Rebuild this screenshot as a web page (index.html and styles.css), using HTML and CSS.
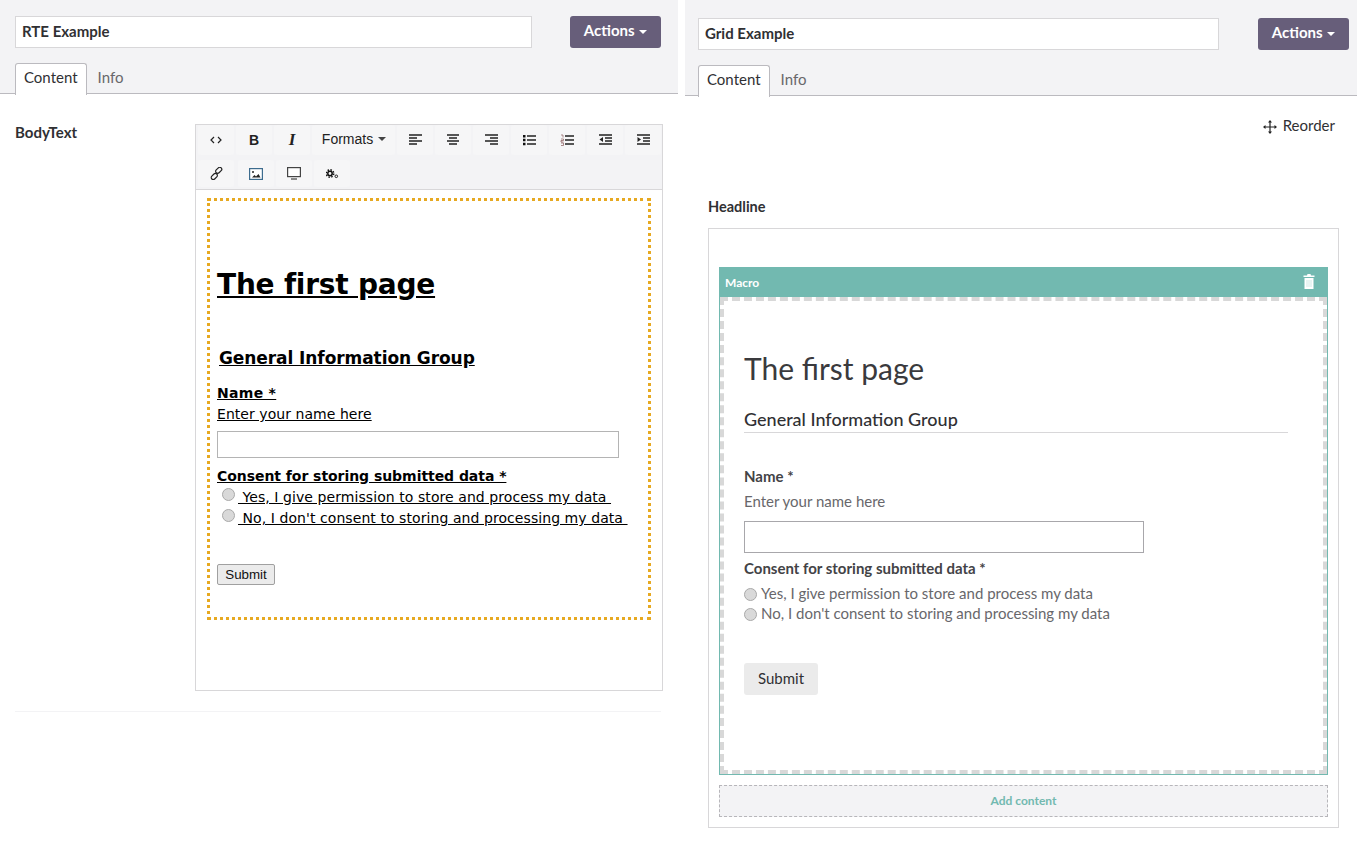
FILE: index.html
```html
<!DOCTYPE html>
<html lang="en">
<head>
  <meta charset="UTF-8" />
  <title>RTE and Grid Examples</title>
  <link rel="stylesheet" href="styles.css">
</head>
<body>
  <!-- left editor: rich text -->
  <section class="panel panel-rte">
    <div class="head">
      <div class="head-row">
        <input class="name-input" type="text" value="RTE Example" />
        <button class="actions-btn">Actions <span class="caret"></span></button>
      </div>
      <div class="tabs">
        <span class="tab active">Content</span>
        <span class="tab">Info</span>
      </div>
    </div>

    <div class="prop-row">
      <label class="prop-label">BodyText</label>
      <div class="rte">
        <div class="toolbar">
          <div class="tool-line">
            <span class="tool"><svg width="12" height="12" viewBox="0 0 12 12"><path d="M4 3 1 6l3 3M8 3l3 3-3 3" fill="none" stroke="#222" stroke-width="1.2"/></svg></span>
            <span class="tool"><b class="tool-b">B</b></span>
            <span class="tool"><i class="tool-i">I</i></span>
            <span class="tool tool-formats">Formats <span class="caret dark"></span></span>
            <span class="tool"><svg width="14" height="12" viewBox="0 0 14 12"><path d="M1 1h13M1 4h8M1 7h13M1 10h8" stroke="#222" stroke-width="1.5"/></svg></span>
            <span class="tool"><svg width="14" height="12" viewBox="0 0 14 12"><path d="M1 1h12M3 4h8M1 7h12M3 10h8" stroke="#222" stroke-width="1.5"/></svg></span>
            <span class="tool"><svg width="14" height="12" viewBox="0 0 14 12"><path d="M1 1h13M6 4h8M1 7h13M6 10h8" stroke="#222" stroke-width="1.5"/></svg></span>
            <span class="tool"><svg width="14" height="12" viewBox="0 0 14 12"><path d="M5 2h9M5 6h9M5 10h9" stroke="#222" stroke-width="1.4"/><path d="M1 1h2.500v2.500H1zM1 4.800h2.500v2.500H1zM1 8.700h2.500v2.500H1z" fill="#111"/></svg></span>
            <span class="tool"><svg width="14" height="12" viewBox="0 0 14 12"><path d="M5 2h9M5 6h9M5 10h9" stroke="#222" stroke-width="1.4"/><path d="M1 1h2v2.500M1 5h2.500v1.500H1V8h2.500M1 9h2.500v2.500H1" fill="none" stroke="#8a5a5a" stroke-width=".7"/></svg></span>
            <span class="tool"><svg width="14" height="12" viewBox="0 0 14 12"><path d="M1 1h13M7 4h7M7 7h7M1 10h13" stroke="#222" stroke-width="1.5"/><path d="M5 3v5L1.500 5.500z" fill="#222"/></svg></span>
            <span class="tool"><svg width="14" height="12" viewBox="0 0 14 12"><path d="M1 1h13M7 4h7M7 7h7M1 10h13" stroke="#222" stroke-width="1.5"/><path d="M1.500 3v5L5 5.500z" fill="#222"/></svg></span>
          </div>
          <div class="tool-line">
            <span class="tool"><svg width="13" height="13" viewBox="0 0 13 13"><g fill="none" stroke="#222" stroke-width="1.2"><rect x="6.700" y="-.2" width="4" height="7" rx="2" transform="rotate(45 8.700 3.300)"/><rect x="2.300" y="6" width="4" height="7" rx="2" transform="rotate(45 4.300 9.500)"/></g></svg></span>
            <span class="tool"><svg width="14" height="12" viewBox="0 0 14 12"><rect x=".6" y=".6" width="12.800" height="10.800" fill="#fff" stroke="#3d6c8e" stroke-width="1.2"/><path d="M3 9.500 5.500 7l1.500 1.500L9.500 6l2 3.500z" fill="#222"/><circle cx="4" cy="4" r="1" fill="#222"/></svg></span>
            <span class="tool"><svg width="14" height="13" viewBox="0 0 14 13"><rect x=".6" y=".6" width="12.800" height="9" fill="#fff" stroke="#444" stroke-width="1.2"/><path d="M4 12h6" stroke="#666" stroke-width="1.500"/></svg></span>
            <span class="tool"><svg width="13" height="10" viewBox="0 0 13 10"><circle cx="4" cy="4.500" r="2.200" fill="none" stroke="#111" stroke-width="1.500"/><circle cx="4" cy="4.500" r="3.700" fill="none" stroke="#111" stroke-width="1.500" stroke-dasharray="1.500 1.400"/><circle cx="10.300" cy="7.300" r="1.300" fill="none" stroke="#222"/></svg></span>
          </div>
        </div>
        <div class="rte-body">
          <div class="macro-dotted">
            <h1 class="rte-h1">The first page</h1>
            <h2 class="rte-h2">General Information Group</h2>
            <div class="rte-label">Name *</div>
            <div class="rte-help">Enter your name here</div>
            <input class="rte-input" type="text" />
            <div class="rte-label rte-label-2">Consent for storing submitted data *</div>
            <div class="rte-radio"><span class="radio"></span><u>&nbsp;Yes, I give permission to store and process my data&nbsp;</u></div>
            <div class="rte-radio"><span class="radio"></span><u>&nbsp;No, I don't consent to storing and processing my data&nbsp;</u></div>
            <button class="rte-submit">Submit</button>
          </div>
        </div>
      </div>
    </div>
    <div class="prop-divider"></div>
  </section>

  <!-- right editor: grid -->
  <section class="panel panel-grid">
    <div class="head">
      <div class="head-row">
        <input class="name-input" type="text" value="Grid Example" />
        <button class="actions-btn">Actions <span class="caret"></span></button>
      </div>
      <div class="tabs">
        <span class="tab active">Content</span>
        <span class="tab">Info</span>
      </div>
    </div>

    <div class="reorder">
      <svg width="14" height="14" viewBox="0 0 14 14"><path d="M7 1v12M1 7h12" stroke="#222" stroke-width="1.200"/><path d="M7 0 5 2.500h4zM7 14l-2-2.500h4zM0 7l2.500-2v4zM14 7l-2.500-2v4z" fill="#222"/></svg>
      <span>Reorder</span>
    </div>

    <div class="grid-prop">
      <div class="grid-label">Headline</div>
      <div class="grid-box">
        <div class="grid-control">
          <div class="control-bar">
            <span>Macro</span>
            <svg width="12" height="15" viewBox="0 0 12 15"><path d="M4.500 0h3l.5 1.500h3.500V3H.5V1.500H4zM1.500 4h9v11h-9z" fill="#fff"/><path d="M4 6v7M6 6v7M8 6v7" stroke="#c5e3df" stroke-width=".8"/></svg>
          </div>
          <div class="control-body">
            <div class="form-wrap">
              <h1 class="grid-h1">The first page</h1>
              <h2 class="grid-h2">General Information Group</h2>
              <div class="field-label">Name *</div>
              <div class="field-help">Enter your name here</div>
              <input class="field-input" type="text" />
              <div class="field-label field-label-2">Consent for storing submitted data *</div>
              <div class="field-radio"><span class="radio"></span>Yes, I give permission to store and process my data</div>
              <div class="field-radio"><span class="radio"></span>No, I don't consent to storing and processing my data</div>
              <button class="field-submit">Submit</button>
            </div>
          </div>
        </div>
        <div class="add-content">Add content</div>
      </div>
    </div>
  </section>
</body>
</html>
```

FILE: styles.css
```css
* {
  box-sizing: border-box;
}
html, body {
  margin: 0;
  padding: 0;
}
body {
  display: flex;
  gap: 7px;
  height: 842px;
  overflow: hidden;
  background: #fff;
  font-family: Lato, "Noto Sans", sans-serif;
  font-size: 15px;
  color: #303033;
}
.panel-rte {
  width: 678px;
}
.panel-grid {
  width: 672px;
}

/* header */
.head {
  background: #f3f3f5;
  border-bottom: 1px solid #bbbabf;
  height: 94px;
  padding: 16px 17px 0 15px;
}
.panel-grid .head {
  height: 96px;
  padding: 18px 8px 0 13px;
}
.head-row {
  display: flex;
  justify-content: space-between;
  align-items: flex-start;
}
.name-input {
  width: 517px;
  height: 32px;
  border: 1px solid #d8d7d9;
  background: #fff;
  padding: 0 6px 3px;
  font-family: Lato, sans-serif;
  font-size: 15px;
  font-weight: 700;
  color: #303033;
}
.panel-grid .name-input {
  width: 521px;
}
.actions-btn {
  width: 91px;
  height: 32px;
  border: none;
  border-radius: 3px;
  background: #675e7a;
  color: #fff;
  font-family: Lato, sans-serif;
  font-size: 15px;
  font-weight: 700;
  padding: 0 0 5px;
}
.caret {
  display: inline-block;
  width: 0;
  height: 0;
  margin-left: 1px;
  vertical-align: middle;
  border-left: 4px solid transparent;
  border-right: 4px solid transparent;
  border-top: 4px solid #fff;
}
.caret.dark {
  border-top-color: #444;
}
.tabs {
  display: flex;
  margin-top: 15px;
}
.tab {
  height: 31px;
  padding: 0 11px;
  line-height: 29px;
  color: #68676b;
}
.tab.active {
  height: 32px;
  padding: 0 8px;
  line-height: 27px;
  background: #fff;
  color: #303033;
  border: 1px solid #bbbabf;
  border-bottom: none;
  border-radius: 3px 3px 0 0;
  position: relative;
  z-index: 1;
}

/* rich text property */
.prop-row {
  display: flex;
  padding: 29px 15px 0;
}
.prop-label {
  width: 180px;
  font-size: 15px;
  font-weight: 700;
  line-height: 18px;
}
.rte {
  width: 468px;
  height: 567px;
  margin-top: 1px;
  border: 1px solid #d8d7d9;
}
.toolbar {
  height: 65px;
  background: #f3f3f5;
  border-bottom: 1px solid #d8d7d9;
  padding: 0 0 0 2px;
}
.tool-line {
  display: flex;
  gap: 2px;
  height: 30px;
  margin-bottom: 5px;
  white-space: nowrap;
}
.tool-line + .tool-line {
  height: 27px;
  margin: 0;
}
.tool {
  display: flex;
  align-items: center;
  justify-content: center;
  flex: none;
  width: 36px;
  background: #f6f6f7;
  border-radius: 3px;
}
.tool-line + .tool-line .tool:nth-child(2) {
  margin-left: 2px;
}
.tool-b {
  font-family: "Liberation Sans", sans-serif;
  font-size: 14px;
  color: #222;
}
.tool-i {
  font-family: "Liberation Serif", serif;
  font-size: 17px;
  font-weight: 700;
  color: #222;
}
.tool-formats {
  width: 83px;
  font-family: "Liberation Sans", sans-serif;
  font-size: 14px;
  color: #222;
  padding: 0 0 2px 1px;
  gap: 4px;
}
.rte-body {
  padding: 8px 11px 0;
}
.macro-dotted {
  width: 444px;
  height: 422px;
  border: 3px dotted #e7a921;
  padding: 0 7px;
  font-family: "DejaVu Sans", Verdana, sans-serif;
  font-size: 14px;
  color: #000;
}
.rte-h1 {
  margin: 65px 0 0;
  font-size: 28px;
  line-height: 37px;
  font-weight: 700;
  letter-spacing: -.22px;
  text-decoration: underline;
}
.rte-h2 {
  margin: 43px 0 0 2px;
  font-size: 17px;
  line-height: 24px;
  font-weight: 700;
  letter-spacing: -.08px;
  text-decoration: underline;
}
.rte-label {
  margin-top: 13px;
  font-weight: 700;
  line-height: 21px;
  letter-spacing: .3px;
  text-decoration: underline;
}
.rte-help {
  line-height: 21px;
  letter-spacing: .05px;
  text-decoration: underline;
}
.rte-input {
  display: block;
  width: 402px;
  height: 27px;
  margin-top: 6px;
  border: 1px solid #b4b4b4;
  background: #fff;
}
.rte-label-2 {
  margin-top: 8px;
  letter-spacing: -.05px;
}
.rte-radio {
  display: flex;
  height: 21px;
  line-height: 21px;
  padding-left: 5px;
  letter-spacing: .07px;
  white-space: pre;
}
.radio {
  flex: none;
  width: 13px;
  height: 13px;
  margin: 1px 3px 0 0;
  border-radius: 50%;
  border: 1px solid #a9a9a9;
  background: #d9d9d9;
}
.rte-submit {
  display: block;
  width: 58px;
  height: 21px;
  margin-top: 35px;
  padding: 0;
  border: 1px solid #a0a0a0;
  border-radius: 2px;
  background: #ebebeb;
  font-family: "Liberation Sans", sans-serif;
  font-size: 13.33px;
  color: #111;
}
.prop-divider {
  height: 1px;
  margin: 20px 17px 0 15px;
  background: #f3f3f5;
}

/* grid property */
.reorder {
  display: flex;
  justify-content: flex-end;
  align-items: center;
  gap: 6px;
  height: 20px;
  margin-top: 19px;
  padding-right: 22px;
  font-size: 15px;
}
.reorder svg {
  margin-top: 4px;
}
.grid-prop {
  padding: 0 18px 0 23px;
}
.grid-label {
  margin-top: 63px;
  height: 18px;
  font-size: 14.5px;
  font-weight: 700;
  line-height: 18px;
}
.grid-box {
  width: 631px;
  height: 600px;
  margin-top: 12px;
  padding: 38px 10px 0;
  border: 1px solid #d8d7d9;
}
.grid-control {
  border: 1px solid #72b9b0;
  height: 508px;
}
.control-bar {
  display: flex;
  justify-content: space-between;
  align-items: center;
  height: 29px;
  padding: 0 12px 0 5px;
  background: #72b9b0;
  color: #fff;
  font-size: 12px;
  font-weight: 700;
}
.control-bar svg {
  margin-top: -2px;
}
.control-body {
  height: 477px;
  border: 4px dashed #d8d8d8;
}
.form-wrap {
  padding: 0 35px 0 20px;
}
.grid-h1 {
  margin: 47px 0 0;
  font-size: 30px;
  font-weight: 400;
  line-height: 40px;
  color: #3a3a3d;
}
.grid-h2 {
  margin: 19px 0 0;
  height: 26px;
  font-size: 18px;
  font-weight: 500;
  line-height: 24px;
  border-bottom: 1px solid #d8d7d9;
}
.field-label {
  margin-top: 33px;
  font-size: 15px;
  font-weight: 700;
  line-height: 20px;
  color: #434346;
}
.field-help {
  margin-top: 5px;
  font-size: 15px;
  line-height: 20px;
  color: #68676b;
}
.field-input {
  display: block;
  width: 400px;
  height: 32px;
  margin-top: 10px;
  border: 1px solid #a8a7ab;
  background: #fff;
}
.field-label-2 {
  margin-top: 5px;
}
.field-radio {
  display: flex;
  align-items: center;
  height: 20px;
  font-size: 15px;
  color: #68676b;
}
.field-label-2 + .field-radio {
  margin-top: 5px;
}
.field-radio .radio {
  margin: 3px 4px 0 0;
}
.field-submit {
  display: block;
  width: 74px;
  height: 32px;
  margin-top: 40px;
  padding: 0 0 3px;
  border: none;
  border-radius: 3px;
  background: #ebebeb;
  font-family: Lato, sans-serif;
  font-size: 15px;
  color: #303033;
}
.add-content {
  height: 32px;
  margin-top: 10px;
  border: 1px dashed #b7b6ba;
  background: #f3f3f5;
  color: #72b9b0;
  font-size: 12px;
  font-weight: 700;
  line-height: 29px;
  text-align: center;
}
```
